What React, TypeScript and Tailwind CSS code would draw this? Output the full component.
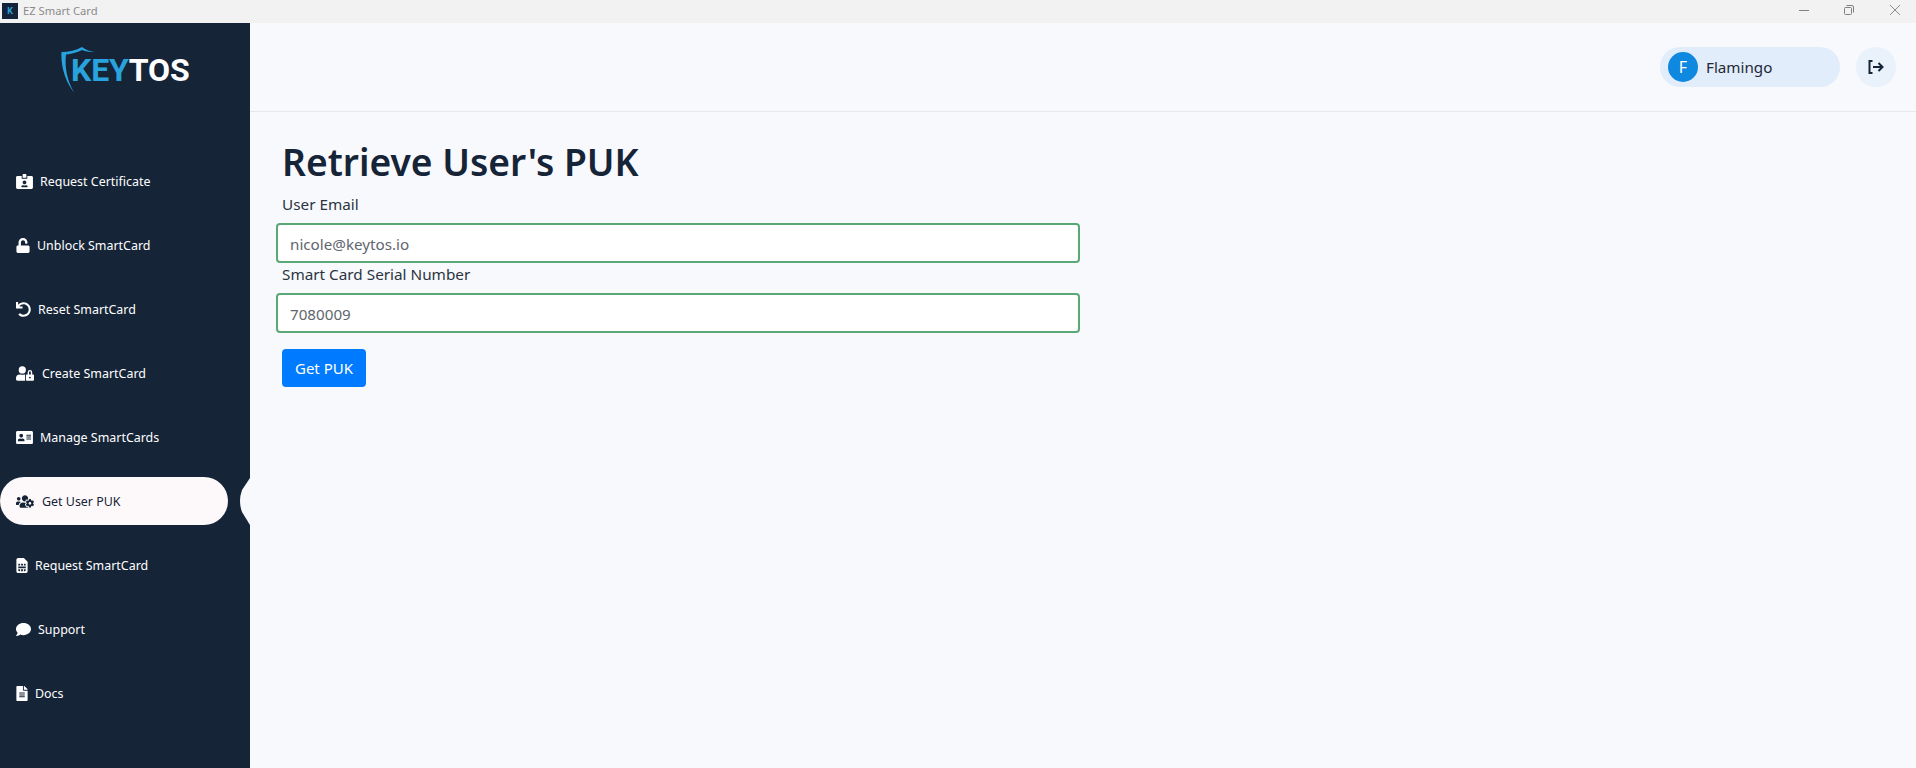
import {
  FaIdCardAlt,
  FaUnlock,
  FaUndo,
  FaUserLock,
  FaAddressCard,
  FaUsersCog,
  FaSimCard,
  FaComment,
  FaFileAlt,
} from "react-icons/fa";
import { IconType } from "react-icons";

const UI_FONT = "font-['Noto_Sans','Open_Sans',sans-serif]";

const NAV_ITEMS: { label: string; icon: IconType; iconW: string; gap: string; active?: boolean }[] = [
  { label: "Request Certificate", icon: FaIdCardAlt, iconW: "w-[17px]", gap: "gap-[7px]" },
  { label: "Unblock SmartCard", icon: FaUnlock, iconW: "w-[14px]", gap: "gap-[7px]" },
  { label: "Reset SmartCard", icon: FaUndo, iconW: "w-[15px]", gap: "gap-[7px]" },
  { label: "Create SmartCard", icon: FaUserLock, iconW: "w-[18px]", gap: "gap-[8px]" },
  { label: "Manage SmartCards", icon: FaAddressCard, iconW: "w-[17px]", gap: "gap-[7px]" },
  { label: "Get User PUK", icon: FaUsersCog, iconW: "w-[18px]", gap: "gap-[8px]", active: true },
  { label: "Request SmartCard", icon: FaSimCard, iconW: "w-[12px]", gap: "gap-[7px]" },
  { label: "Support", icon: FaComment, iconW: "w-[15px]", gap: "gap-[7px]" },
  { label: "Docs", icon: FaFileAlt, iconW: "w-[12px]", gap: "gap-[7px]" },
];

function TitleBar() {
  return (
    <div className="flex h-[23px] items-center justify-between bg-[#f2f2f2]">
      <div className="flex items-center">
        <div className="ml-[2px] flex h-4 w-4 items-center justify-center bg-[#14233a] font-['Roboto',sans-serif] text-[9px] font-bold text-[#29a3dd]">
          K
        </div>
        <span className="ml-[5px] text-[11.2px] text-[#8a8a8a]">EZ Smart Card</span>
      </div>
      <div className="flex items-center gap-[35px] pb-[3px] pr-4 text-[#808080]">
        <svg className="h-[10px] w-[10px]" viewBox="0 0 10 10" stroke="currentColor" strokeWidth="1">
          <path d="M0 5.5h10" />
        </svg>
        {/* restore icon */}
        <svg className="h-[10px] w-[10px]" viewBox="0 0 10 10" fill="none" stroke="currentColor" strokeWidth="1">
          <rect x="0.5" y="2.5" width="7" height="7" rx="1" />
          <path d="M2.5 0.5h5.5a1.5 1.5 0 0 1 1.5 1.5v5.5" />
        </svg>
        <svg className="ml-px h-[10px] w-[10px]" viewBox="0 0 10 10" stroke="currentColor" strokeWidth="0.9">
          <path d="M0 0l10 10M10 0L0 10" />
        </svg>
      </div>
    </div>
  );
}

function Logo() {
  return (
    <div className="flex h-[134px] justify-center pt-[22px]">
      <div className="relative h-[48px] w-[130px]">
        <svg className="absolute left-px top-[2px] h-[46px] w-[34px]" viewBox="0 0 34 46" fill="#29a3dd">
          <path d="M0.5 5 C8 5 15 3.5 21 0 C25 3 29 4.5 34 5 C29 5.2 25 4.5 21 3 C16 5.5 10 7 5 7.5 C3.5 20 6 34 13.5 46 C5 36 -0.5 20 0.5 5 Z" />
        </svg>
        <div className="absolute left-[11px] top-[6px] font-['Roboto',sans-serif] text-[32px] font-bold leading-[38px] tracking-[-0.2px]">
          <span className="text-[#29a3dd]">KEY</span>
          <span className="text-white">TOS</span>
        </div>
      </div>
    </div>
  );
}

function Sidebar() {
  return (
    <aside className="relative w-[250px] shrink-0 bg-[#162437]">
      <Logo />
      <nav className="flex flex-col gap-4">
        {NAV_ITEMS.map((item) => (
          <div key={item.label} className="relative">
            <div
              className={`flex h-12 w-[228px] items-center pl-4 text-[12.45px] ${item.gap} ${
                item.active ? "rounded-[24px] bg-[#fdf9fa] text-[#162437]" : "text-white"
              }`}
            >
              <item.icon className={`${item.iconW} h-[15px] shrink-0`} />
              <span className="mt-[2px]">{item.label}</span>
            </div>
            {item.active && (
              <svg className="absolute left-[239px] top-0 h-12 w-[11px]" viewBox="0 0 11 48" fill="#f8f9fd">
                <path d="M11 1 L3 13 Q-1 24 3 35 L11 48 Z" />
              </svg>
            )}
          </div>
        ))}
      </nav>
    </aside>
  );
}

function Header() {
  return (
    <header className="flex h-[89px] items-center justify-end gap-4 border-b border-[#e6e8ec] pr-5">
      <div className="flex h-10 w-[180px] items-center gap-[8px] rounded-[20px] bg-[#e1edfb] pl-2">
        <div className="flex h-[30px] w-[30px] items-center justify-center rounded-full bg-[#0f88e0] text-[16px] text-white">
          F
        </div>
        <span className="text-[15.2px] text-[#1f2937]">Flamingo</span>
      </div>
      <div className="flex h-10 w-10 items-center justify-center rounded-full bg-[#e9f1fa] text-[#162437]">
        <svg className="h-4 w-4" viewBox="0 0 16 16" fill="none" stroke="currentColor" strokeWidth="2">
          <path d="M4.5 2H1.5v12h3" />
          <path d="M5 8h9.5M10.5 4l4 4-4 4" />
        </svg>
      </div>
    </header>
  );
}

function Field({ label, value }: { label: string; value: string }) {
  return (
    <div>
      <label className="ml-[6px] block h-[30px] text-[15.3px] leading-[23px] text-[#2b3440]">{label}</label>
      <input
        readOnly
        value={value}
        className="block h-10 w-[804px] rounded-[4px] border-2 border-[#59a876] bg-white px-[12px] pt-[2px] text-[15.2px] text-[#60666d]"
      />
    </div>
  );
}

export default function App() {
  return (
    <div className={`flex h-[768px] flex-col overflow-hidden bg-[#f8f9fd] ${UI_FONT}`}>
      <TitleBar />
      <div className="flex flex-1">
        <Sidebar />
        <main className="flex-1">
          <Header />
          <div className="pl-[26px]">
            <h1 className="ml-[6px] mt-6 h-[57px] text-[37.2px] font-semibold leading-[52px] text-[#162437]">
              Retrieve User's PUK
            </h1>
            <Field label="User Email" value="nicole@keytos.io" />
            <Field label="Smart Card Serial Number" value="7080009" />
            <button className="ml-[6px] mt-4 h-[38px] w-[84px] rounded-[4px] bg-[#007bff] text-[15px] text-white">
              Get PUK
            </button>
          </div>
        </main>
      </div>
    </div>
  );
}
